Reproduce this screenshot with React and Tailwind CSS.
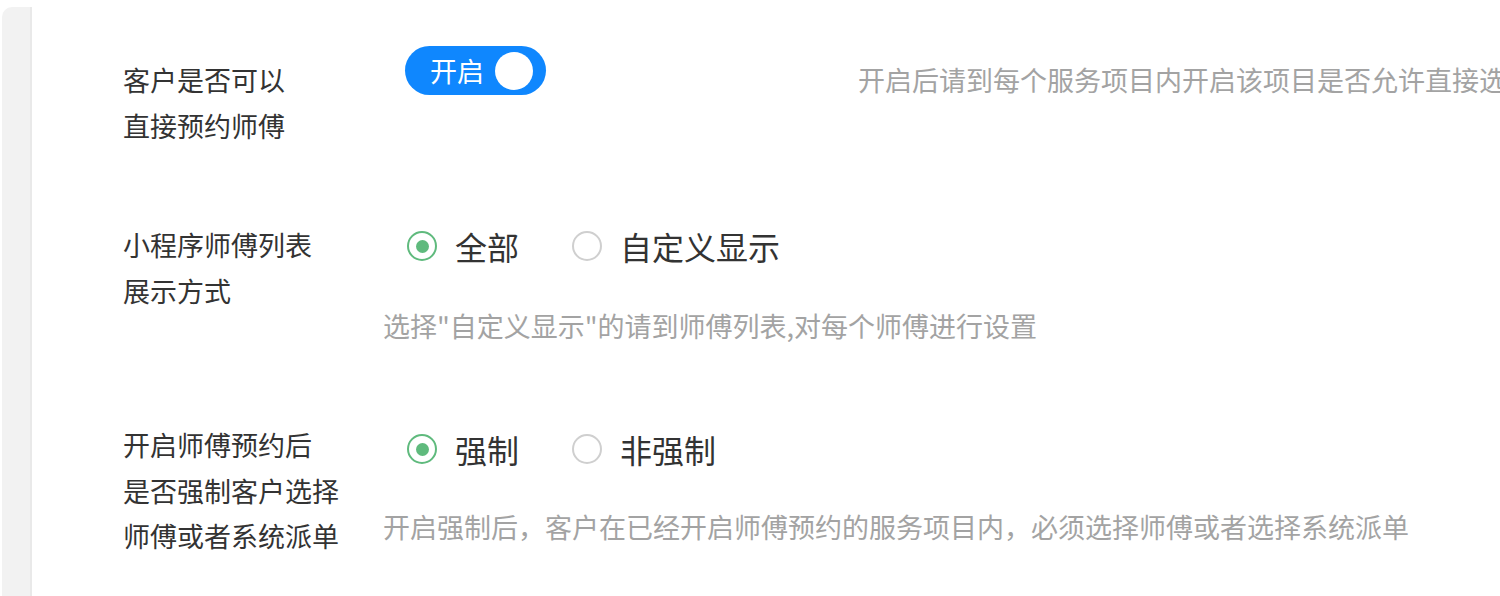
const font = { fontFamily: '"Noto Sans CJK SC", "Noto Sans", sans-serif' }

function Radio({ checked, label, className = '' }) {
  return (
    <div className={`flex items-center ${className}`}>
      <span
        className={`flex h-[30px] w-[30px] items-center justify-center rounded-full border-2 ${
          checked ? 'border-[#5fba7d]' : 'border-[#cfcfcf]'
        }`}
      >
        {checked && <span className="h-[13px] w-[13px] rounded-full bg-[#5fba7d]" />}
      </span>
      <span className="ml-[18px] text-[32px] leading-[46px] text-[#333]">{label}</span>
    </div>
  )
}

export default function App() {
  return (
    <div className="flex h-[596px] w-[1500px] overflow-hidden bg-white" style={font}>
      {/* left gray strip */}
      <div className="ml-[2px] mt-[7px] w-[30px] shrink-0 rounded-tl-[10px] border-r-2 border-[#e9e9e9] bg-[#f2f2f2]" />

      <div className="flex min-w-0 flex-1 flex-col gap-[73px] pl-[91px] pt-[46px]">
        {/* row 1 */}
        <div className="flex items-start">
          <div className="w-[282px] shrink-0 pt-[11px] text-[27px] leading-[46px] text-[#333]">
            客户是否可以
            <br />
            直接预约师傅
          </div>
          <button className="flex h-[49px] w-[141px] shrink-0 items-center rounded-full bg-[#0f87fe] pl-[25px] pr-[13px]">
            <span className="text-[27px] leading-none text-white">开启</span>
            <span className="ml-auto h-[38px] w-[38px] rounded-full bg-white" />
          </button>
          <div className="ml-[312px] whitespace-nowrap pt-[11px] text-[27px] leading-[46px] text-[#a3a3a3]">
            开启后请到每个服务项目内开启该项目是否允许直接选择师傅
          </div>
        </div>

        {/* row 2 */}
        <div className="flex items-start">
          <div className="w-[260px] shrink-0 text-[27px] leading-[46px] text-[#333]">
            小程序师傅列表
            <br />
            展示方式
          </div>
          <div className="flex flex-col pt-[1px]">
            <div className="flex items-center pl-[24px]">
              <Radio checked label="全部" />
              <Radio label="自定义显示" className="ml-[53px]" />
            </div>
            <div className="mt-[34px] whitespace-nowrap text-[27px] leading-[46px] text-[#a3a3a3]">
              选择"自定义显示"的请到师傅列表,对每个师傅进行设置
            </div>
          </div>
        </div>

        {/* row 3 */}
        <div className="flex items-start">
          <div className="w-[260px] shrink-0 text-[27px] leading-[45.5px] text-[#333]">
            开启师傅预约后
            <br />
            是否强制客户选择
            <br />
            师傅或者系统派单
          </div>
          <div className="flex flex-col pt-[4px]">
            <div className="flex items-center pl-[24px]">
              <Radio checked label="强制" />
              <Radio label="非强制" className="ml-[53px]" />
            </div>
            <div className="mt-[32px] whitespace-nowrap text-[27px] leading-[46px] text-[#a3a3a3]">
              开启强制后，客户在已经开启师傅预约的服务项目内，必须选择师傅或者选择系统派单
            </div>
          </div>
        </div>
      </div>
    </div>
  )
}
